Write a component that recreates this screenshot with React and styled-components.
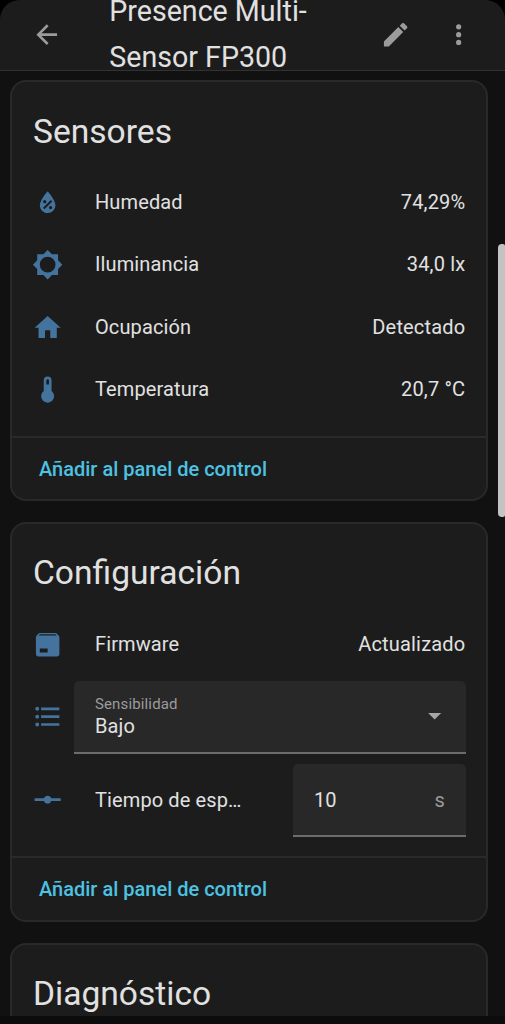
import styled, { createGlobalStyle, css } from 'styled-components'

const GlobalStyle = createGlobalStyle`
    * {
        box-sizing: border-box;
    }
    body {
        margin: 0;
        background-color: #000;
        font-family: Roboto, "Noto Sans", sans-serif;
        font-size: 20px;
        letter-spacing: .12px;
        color: #e1e1e1;
    }
`

const icons = {
    back: 'M20,11V13H8L13.5,18.5L12.08,19.92L4.16,12L12.08,4.08L13.5,5.5L8,11H20Z',
    pencil: 'M20.71,7.04C21.1,6.65 21.1,6 20.71,5.63L18.37,3.29C18,2.9 17.35,2.9 16.96,3.29L15.12,5.12L18.87,8.87M3,17.25V21H6.75L17.81,9.93L14.06,6.18L3,17.25Z',
    dots: 'M12,16A2,2 0 0,1 14,18A2,2 0 0,1 12,20A2,2 0 0,1 10,18A2,2 0 0,1 12,16M12,10A2,2 0 0,1 14,12A2,2 0 0,1 12,14A2,2 0 0,1 10,12A2,2 0 0,1 12,10M12,4A2,2 0 0,1 14,6A2,2 0 0,1 12,8A2,2 0 0,1 10,6A2,2 0 0,1 12,4Z',
    humidity: 'M12,3.25C12,3.25 6,10 6,14C6,17.32 8.69,20 12,20A6,6 0 0,0 18,14C18,10 12,3.25 12,3.25M14.47,9.97L15.53,11.03L9.53,17.03L8.47,15.97M9.75,10A1.25,1.25 0 0,1 11,11.25A1.25,1.25 0 0,1 9.75,12.5A1.25,1.25 0 0,1 8.5,11.25A1.25,1.25 0 0,1 9.75,10M14.25,14.5A1.25,1.25 0 0,1 15.5,15.75A1.25,1.25 0 0,1 14.25,17A1.25,1.25 0 0,1 13,15.75A1.25,1.25 0 0,1 14.25,14.5Z',
    brightness: 'M12,18A6,6 0 0,1 6,12A6,6 0 0,1 12,6A6,6 0 0,1 18,12A6,6 0 0,1 12,18M20,15.31L23.31,12L20,8.69V4H15.31L12,0.69L8.69,4H4V8.69L0.69,12L4,15.31V20H8.69L12,23.31L15.31,20H20V15.31Z',
    home: 'M10,20V14H14V20H19V12H22L12,3L2,12H5V20H10Z',
    thermometer: 'M15 13V5A3 3 0 0 0 9 5V13A5 5 0 1 0 15 13M12 4A1 1 0 0 1 13 5V8H11V5A1 1 0 0 1 12 4Z',
    firmware: 'M5.12,5H18.87L17.93,4H5.93L5.12,5M20.54,5.23C20.83,5.57 21,6 21,6.5V19A2,2 0 0,1 19,21H5A2,2 0 0,1 3,19V6.5C3,6 3.17,5.57 3.46,5.23L4.84,3.55C5.12,3.21 5.53,3 6,3H18C18.47,3 18.88,3.21 19.15,3.55L20.54,5.23M6,18H12V15H6V18Z',
    list: 'M7,5H21V7H7V5M7,13V11H21V13H7M4,4.5A1.5,1.5 0 0,1 5.5,6A1.5,1.5 0 0,1 4,7.5A1.5,1.5 0 0,1 2.5,6A1.5,1.5 0 0,1 4,4.5M4,10.5A1.5,1.5 0 0,1 5.5,12A1.5,1.5 0 0,1 4,13.5A1.5,1.5 0 0,1 2.5,12A1.5,1.5 0 0,1 4,10.5M7,19V17H21V19H7M4,16.5A1.5,1.5 0 0,1 5.5,18A1.5,1.5 0 0,1 4,19.5A1.5,1.5 0 0,1 2.5,18A1.5,1.5 0 0,1 4,16.5Z',
    vertex: 'M2,11H9.17C9.58,9.83 10.69,9 12,9C13.31,9 14.42,9.83 14.83,11H22V13H14.83C14.42,14.17 13.31,15 12,15C10.69,15 9.58,14.17 9.17,13H2V11Z',
    down: 'M7,10L12,15L17,10H7Z',
}

const Svg = styled.svg`
    display: block;
    flex: none;
    width: 31.3px;
    height: 31.3px;
    fill: currentColor;
`

function Icon({ name }) {
    return (
        <Svg viewBox="0 0 24 24" aria-hidden="true">
            <path d={icons[name]} fillRule="evenodd" />
        </Svg>
    )
}

const Screen = styled.div`
    position: relative;
    display: flex;
    flex-direction: column;
    height: 1024px;
    width: 505px;
    overflow: hidden;
    background-color: #111;
    border-radius: 20px 20px 0 0;
`

const Toolbar = styled.header`
    display: flex;
    align-items: center;
    flex: none;
    height: 71px;
    padding: 0 31px 1px;
    background-color: #1c1c1c;
    border-bottom: 1px solid #323232;
`

const IconButton = styled.button`
    display: flex;
    padding: 0;
    border: 0;
    background: none;
    color: #9b9b9b;
`

const PageTitle = styled.h1`
    width: 240px;
    margin: -1px 34px 0 47px;
    font-size: 28.6px;
    font-weight: 400;
    line-height: 46px;
    letter-spacing: 0;
`

const ToolbarActions = styled.div`
    display: flex;
    gap: 31px;
    margin-left: auto;
`

const Content = styled.main`
    display: flex;
    flex-direction: column;
    flex: 1;
    gap: 21px;
    min-height: 0;
    overflow: hidden;
    padding: 9px 17px 0 10px;
`

const Card = styled.section`
    flex: none;
    border: 2px solid #292929;
    border-radius: 16px;
    background-color: #1c1c1c;
    height: ${({ $height }) => $height}px;
    display: flex;
    flex-direction: column;
`

const CardTitle = styled.h2`
    margin: 0;
    padding: ${({ $top }) => $top || 25}px 21px 0;
    height: 89px;
    font-size: 33.6px;
    font-weight: 400;
    line-height: 48px;
    letter-spacing: 0;
`

const Row = styled.div`
    display: flex;
    align-items: center;
    flex: none;
    height: ${({ $height }) => $height || 62.5}px;
    padding: 0 20px;
    > ${Svg} {
        color: #44739e;
    }
`

const SensorList = styled.div`
    margin-top: -.3px;
    ${Svg} {
        margin-top: 1px;
    }
`

const Name = styled.span`
    flex: 1;
    margin-left: 31.7px;
    overflow: hidden;
    text-overflow: ellipsis;
    white-space: nowrap;
`

const Value = styled.span`
    margin-right: .7px;
    letter-spacing: .17px;
`

const field = css`
    display: flex;
    align-items: center;
    justify-content: space-between;
    height: 73px;
    padding: 0 20px;
    border-radius: 5px 5px 0 0;
    border-bottom: 2px solid #6c6c6c;
    background-color: #282828;
`

const Select = styled.div`
    ${field}
    flex: 1;
    padding-right: 16px;
    margin-left: 11px;
    color: #a6a6a6;
`

const SelectText = styled.div`
    display: flex;
    flex-direction: column;
    margin-left: .6px;
    color: #e1e1e1;
    line-height: 23px;
    small {
        margin-top: -1px;
        font-size: 15px;
        line-height: 21px;
        letter-spacing: .15px;
        color: #9b9b9b;
    }
`

const NumberField = styled.div`
    ${field}
    width: 173px;
    margin-left: 50px;
    padding: 1px 21px 0;
    span {
        color: #9b9b9b;
    }
`

const CardActions = styled.footer`
    display: flex;
    align-items: center;
    height: ${({ $height }) => $height || 64}px;
    margin-top: auto;
    padding: 0 27px;
    border-top: 2px solid #2a2a2a;
`

const ActionLink = styled.button`
    padding: 0;
    border: 0;
    background: none;
    font: 500 20px Roboto, sans-serif;
    color: #4dc2e1;
`

const ScrollThumb = styled.div`
    position: absolute;
    top: 244px;
    right: 0;
    width: 7px;
    height: 273px;
    border-radius: 4px 2px 2px 4px;
    background-color: #c3c3c3;
`

const NavigationBar = styled.div`
    flex: none;
    height: 8px;
    background-color: #0c0c0c;
`

const sensors = [
    { icon: 'humidity', name: 'Humedad', value: '74,29%' },
    { icon: 'brightness', name: 'Iluminancia', value: '34,0 lx' },
    { icon: 'home', name: 'Ocupación', value: 'Detectado' },
    { icon: 'thermometer', name: 'Temperatura', value: '20,7 °C' },
]

function AddToDashboard({ height }) {
    return (
        <CardActions $height={height}>
            <ActionLink>Añadir al panel de control</ActionLink>
        </CardActions>
    )
}

function App() {
    return (
        <>
            <GlobalStyle />
            <Screen>
                <Toolbar>
                    <IconButton aria-label="Atrás"><Icon name="back" /></IconButton>
                    <PageTitle>Presence Multi-Sensor FP300</PageTitle>
                    <ToolbarActions>
                        <IconButton aria-label="Editar"><Icon name="pencil" /></IconButton>
                        <IconButton aria-label="Menú"><Icon name="dots" /></IconButton>
                    </ToolbarActions>
                </Toolbar>
                <Content>
                    <Card $height={421}>
                        <CardTitle $top={26}>Sensores</CardTitle>
                        <SensorList>
                            {sensors.map(({ icon, name, value }) => (
                                <Row key={name}>
                                    <Icon name={icon} />
                                    <Name>{name}</Name>
                                    <Value>{value}</Value>
                                </Row>
                            ))}
                        </SensorList>
                        <AddToDashboard height={63} />
                    </Card>
                    <Card $height={400}>
                        <CardTitle>Configuración</CardTitle>
                        <Row>
                            <Icon name="firmware" />
                            <Name>Firmware</Name>
                            <Value>Actualizado</Value>
                        </Row>
                        <Row $height={83}>
                            <Icon name="list" />
                            <Select>
                                <SelectText>
                                    <small>Sensibilidad</small>
                                    Bajo
                                </SelectText>
                                <Icon name="down" />
                            </Select>
                        </Row>
                        <Row $height={83}>
                            <Icon name="vertex" />
                            <Name>Tiempo de espera</Name>
                            <NumberField>10 <span>s</span></NumberField>
                        </Row>
                        <AddToDashboard />
                    </Card>
                    <Card $height={300}>
                        <CardTitle>Diagnóstico</CardTitle>
                    </Card>
                </Content>
                <NavigationBar />
                <ScrollThumb />
            </Screen>
        </>
    )
}

export default App
